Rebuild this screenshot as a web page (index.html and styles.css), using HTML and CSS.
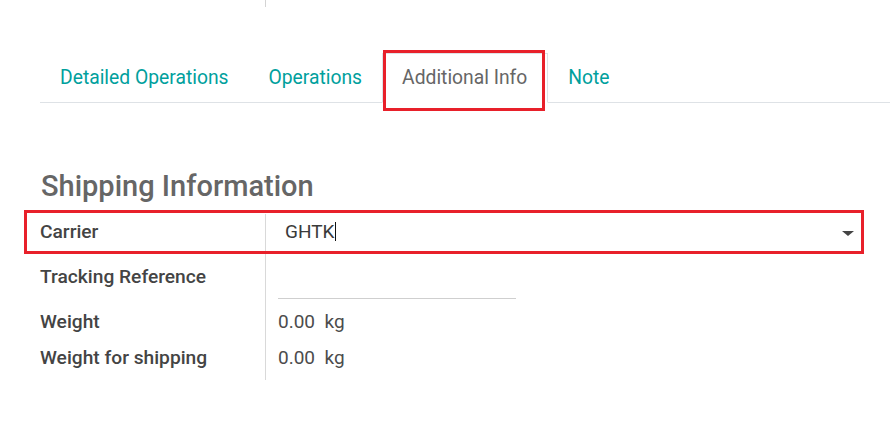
FILE: index.html
```html
<!DOCTYPE html>
<html>
<head>
<meta charset="utf-8">
<link rel="stylesheet" href="styles.css">
</head>
<body>
<div class="top-sep"></div>
<ul class="tabs">
  <li class="tab"><span class="tab-link">Detailed Operations</span></li>
  <li class="tab"><span class="tab-link">Operations</span></li>
  <li class="tab active"><span class="tab-link">Additional Info</span></li>
  <li class="tab"><span class="tab-link">Note</span></li>
</ul>
<h2 class="section-title">Shipping Information</h2>
<div class="form">
  <div class="highlight"></div>
  <div class="label row-carrier">Carrier</div>
  <div class="value row-carrier carrier-value">
    <span class="carrier-text">GHTK</span><span class="cursor"></span>
    <span class="caret"></span>
  </div>
  <div class="label row-tracking">Tracking Reference</div>
  <div class="value row-tracking tracking-value"><span class="line-input"></span></div>
  <div class="label row-weight">Weight</div>
  <div class="value row-weight">0.00&nbsp; kg</div>
  <div class="label row-last">Weight for shipping</div>
  <div class="value row-last">0.00&nbsp; kg</div>
</div>
</body>
</html>
```
FILE: styles.css
```css
html, body {
  margin: 0;
  padding: 0;
  background: #ffffff;
  font-family: Roboto, "Liberation Sans", sans-serif;
  color: #4c4c4c;
}

.top-sep {
  margin-left: 265px;
  width: 1px;
  height: 7px;
  background: #d4d4d4;
}

.tabs {
  list-style: none;
  margin: 46px 0 0 40px;
  padding: 0;
  display: flex;
  border-bottom: 1px solid #dee2e6;
}

.tab {
  margin-bottom: -1px;
  border: 1px solid transparent;
  border-bottom: none;
  position: relative;
}

.tab-link {
  display: block;
  padding: 12px 19px 12px 19px;
  font-size: 19.3px;
  line-height: 24px;
  color: #00a09d;
}

.tab.active {
  border-color: #dee2e6;
  background: #fff;
  border-bottom: 1px solid #fff;
}

.tab.active .tab-link {
  color: #666666;
  padding-right: 20px;
}

.tab.active::after {
  content: "";
  position: absolute;
  left: 0;
  right: 2px;
  top: -4px;
  bottom: -9px;
  border: 3px solid #e8202a;
}

.section-title {
  margin: 66px 0 0 41px;
  font-size: 29px;
  line-height: 35px;
  font-weight: 500;
  color: #666666;
}

.form {
  position: relative;
  margin: 10px 0 0 40px;
  width: 822px;
  display: grid;
  grid-template-columns: 225px 1fr;
  grid-template-rows: 34px 56px 34px 42px;
}

.highlight {
  position: absolute;
  left: -16px;
  top: -4px;
  width: 834px;
  height: 38px;
  border: 3px solid #e8202a;
  pointer-events: none;
}

.label {
  display: flex;
  align-items: center;
  font-size: 19.2px;
  font-weight: 500;
  color: #444444;
}

.value {
  display: flex;
  align-items: center;
  border-left: 1px solid #d9d9d9;
  padding-left: 12px;
  font-size: 19px;
  color: #4c4c4c;
}

.row-last {
  padding-bottom: 4px;
}

.carrier-value {
  padding-left: 19px;
  padding-right: 8px;
}

.carrier-text {
  font-size: 19px;
  color: #3a3a3a;
}

.cursor {
  display: inline-block;
  width: 1px;
  height: 19px;
  background: #111;
}

.caret {
  margin-left: auto;
  margin-top: 5px;
  width: 0;
  height: 0;
  border-left: 6px solid transparent;
  border-right: 6px solid transparent;
  border-top: 5px solid #444;
}

.tracking-value {
  align-items: flex-end;
  padding-bottom: 5px;
}

.line-input {
  display: block;
  width: 238px;
  height: 24px;
  border-bottom: 1px solid #cfcfcf;
}
```
